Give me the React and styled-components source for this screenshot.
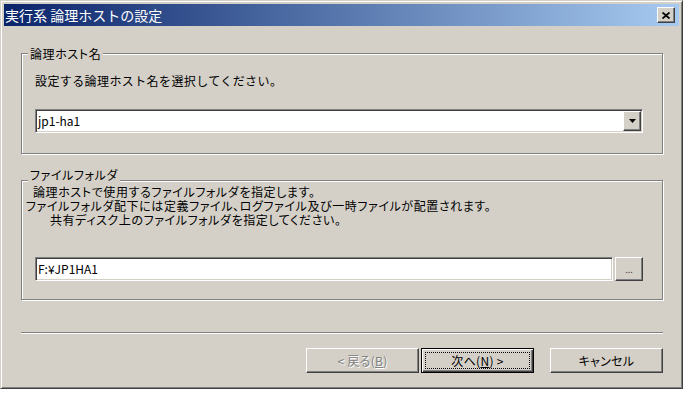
import styled, { createGlobalStyle } from "styled-components";

const GlobalStyle = createGlobalStyle`
  html, body {
    margin: 0;
    padding: 0;
    background: #fff;
  }
  body {
    font-family: "Noto Sans CJK JP", "Noto Sans", sans-serif;
    font-size: 12px;
    color: #000;
  }
`;

const Window = styled.div`
  width: 683px;
  height: 389px;
  box-sizing: border-box;
  background: #d4d0c8;
  border: 1px solid;
  border-color: #d4d0c8 #404040 #404040 #d4d0c8;
  box-shadow: inset 1px 1px 0 #fff, inset -1px -1px 0 #808080;
  padding: 3px;
  display: flex;
  flex-direction: column;
`;

const TitleBar = styled.div`
  height: 22px;
  flex: none;
  display: flex;
  align-items: center;
  justify-content: space-between;
  padding: 0 4px 0 1px;
  background: linear-gradient(to right, #0a246a, #a6caf0);
`;

const Caption = styled.span`
  color: #fff;
  font-size: 14px;
  line-height: 22px;
`;

const raised = `
  background: #d4d0c8;
  border: 1px solid;
  border-color: #fff #404040 #404040 #fff;
  box-shadow: inset -1px -1px 0 #808080;
  box-sizing: border-box;
`;

const CloseButton = styled.div`
  ${raised}
  width: 18px;
  height: 16px;
  display: flex;
  align-items: center;
  justify-content: center;
`;

const Body = styled.div`
  display: flex;
  flex-direction: column;
  padding: 0 16px 0 17px;
`;

const Group = styled.div`
  position: relative;
  margin-top: ${({ $top }) => $top}px;
  border: 1px solid #808080;
  box-shadow: inset 1px 1px 0 #fff, 1px 1px 0 #fff;
  padding: ${({ $pad }) => $pad};
`;

const Legend = styled.span`
  position: absolute;
  left: 6px;
  top: ${({ $lift }) => -$lift}px;
  padding: 0 2px;
  line-height: 14px;
  background: #d4d0c8;
  font-feature-settings: "palt";
  letter-spacing: 0.6px;
`;

const Prompt = styled.div`
  line-height: 14px;
  letter-spacing: 0.4px;
`;

const Line = styled.div`
  line-height: 14px;
  padding-left: ${({ $indent }) => $indent}px;
  font-feature-settings: "palt";
  letter-spacing: 0.6px;
  white-space: nowrap;
`;

const Field = styled.div`
  height: 24px;
  box-sizing: border-box;
  display: flex;
  align-items: center;
  background: #fff;
  border: 1px solid;
  border-color: #808080 #fff #fff #808080;
  box-shadow: inset 1px 1px 0 #404040, inset -1px -1px 0 #d4d0c8;
  padding: 0 1px 0 2px;
  flex: 1;
`;

const FieldText = styled.span`
  flex: 1;
  line-height: 20px;
  font-size: 12px;
`;

const DropButton = styled.div`
  ${raised}
  width: 18px;
  height: 20px;
  display: flex;
  align-items: center;
  justify-content: center;
`;

const FieldRow = styled.div`
  display: flex;
  gap: 2px;
  margin-top: ${({ $top }) => $top}px;
  margin-left: ${({ $left = 0 }) => $left}px;
`;

const BrowseButton = styled.div`
  ${raised}
  width: 28px;
  height: 24px;
  display: flex;
  align-items: flex-end;
  justify-content: center;
  padding-bottom: 6px;
  font-size: 9px;
  line-height: 9px;
  color: #404040;
`;

const Separator = styled.div`
  margin-top: 32px;
  height: 0;
  border-top: 1px solid #808080;
  border-bottom: 1px solid #fff;
`;

const ButtonRow = styled.div`
  display: flex;
  justify-content: flex-end;
  margin-top: 14px;
`;

const Button = styled.div`
  ${raised}
  width: 113px;
  height: 25px;
  display: flex;
  align-items: stretch;
  padding: 3px;
  margin-left: ${({ $gap = 0 }) => $gap}px;
  color: ${({ $disabled }) => ($disabled ? "#808080" : "#000")};
  text-shadow: ${({ $disabled }) => ($disabled ? "1px 1px 0 #fff" : "none")};
  ${({ $default }) =>
    $default &&
    `
    border: 1px solid #000;
    box-shadow: inset 1px 1px 0 #fff, inset -1px -1px 0 #404040, inset -2px -2px 0 #808080;
  `}
`;

const ButtonLabel = styled.span`
  flex: 1;
  display: flex;
  align-items: center;
  justify-content: center;
  line-height: 14px;
  border: 1px dotted ${({ $focus }) => ($focus ? "#000" : "transparent")};
  font-feature-settings: "palt";
  letter-spacing: 0.3px;
`;

const CloseIcon = () => (
  <svg width="8" height="7" viewBox="0 0 8 7">
    <path d="M0.5 0.5 L7.5 6.5 M7.5 0.5 L0.5 6.5" stroke="#000" strokeWidth="1.8" />
  </svg>
);

const ArrowIcon = () => (
  <svg width="7" height="4" viewBox="0 0 7 4">
    <path d="M0 0 H7 L3.5 4 Z" fill="#000" />
  </svg>
);

export default function App() {
  return (
    <>
      <GlobalStyle />
      <Window>
        <TitleBar>
          <Caption>実行系 論理ホストの設定</Caption>
          <CloseButton>
            <CloseIcon />
          </CloseButton>
        </TitleBar>

        <Body>
          {/* 論理ホスト名 */}
          <Group $top={27} $pad="20px 19px 20px 13px">
            <Legend $lift={7}>論理ホスト名</Legend>
            <Prompt>設定する論理ホスト名を選択してください。</Prompt>
            <FieldRow $top={21}>
              <Field>
                <FieldText>jp1-ha1</FieldText>
                <DropButton>
                  <ArrowIcon />
                </DropButton>
              </Field>
            </FieldRow>
          </Group>

          {/* ファイルフォルダ */}
          <Group $top={26} $pad="4px 19px 18px 4px">
            <Legend $lift={13}>ファイルフォルダ</Legend>
            <Line $indent={7}>論理ホストで使用するファイルフォルダを指定します。</Line>
            <Line $indent={0}>
              ファイルフォルダ配下には定義ファイル、ログファイル及び一時ファイルが配置されます。
            </Line>
            <Line $indent={24}>共有ディスク上のファイルフォルダを指定してください。</Line>
            <FieldRow $top={30} $left={9}>
              <Field>
                <FieldText>F:¥JP1HA1</FieldText>
              </Field>
              <BrowseButton>...</BrowseButton>
            </FieldRow>
          </Group>

          <Separator />

          <ButtonRow>
            <Button $disabled>
              <ButtonLabel>
                &lt; 戻る(<u>B</u>)
              </ButtonLabel>
            </Button>
            <Button $default $gap={2}>
              <ButtonLabel $focus>
                次へ(<u>N</u>) &gt;
              </ButtonLabel>
            </Button>
            <Button $gap={16}>
              <ButtonLabel>キャンセル</ButtonLabel>
            </Button>
          </ButtonRow>
        </Body>
      </Window>
    </>
  );
}
